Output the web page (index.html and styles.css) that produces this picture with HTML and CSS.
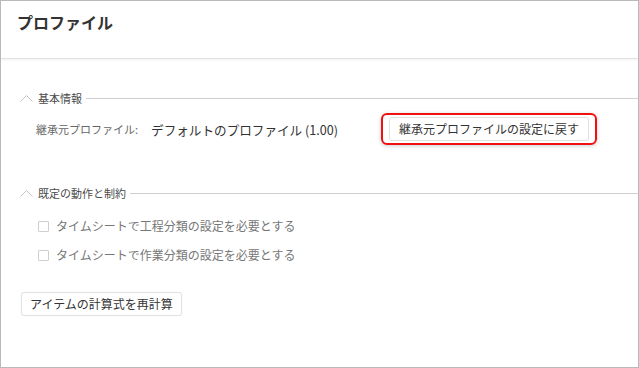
FILE: index.html
```html
<!DOCTYPE html>
<html lang="ja">
<head>
  <meta charset="UTF-8" />
  <meta name="viewport" content="width=device-width, initial-scale=1.0" />
  <title>プロファイル</title>
  <link rel="stylesheet" href="styles.css">
</head>
<body>

<div class="frame">
  <div class="header">
    <h1 class="title">プロファイル</h1>
  </div>

  <div class="section basic">
    <div class="section-head">
      <svg class="chevron" width="13" height="8" viewBox="0 0 13 8"><polyline points="0.5,7.5 6.5,1.5 12.5,7.5" fill="none" stroke="#c4c4c4" stroke-width="1" /></svg>
      <span class="section-title">基本情報</span>
      <span class="rule"></span>
    </div>
    <div class="field">
      <span class="field-label">継承元プロファイル:</span>
      <span class="field-value">デフォルトのプロファイル (1.00)</span>
      <span class="highlight">
        <button class="btn">継承元プロファイルの設定に戻す</button>
      </span>
    </div>
  </div>

  <div class="section rules">
    <div class="section-head">
      <svg class="chevron" width="13" height="8" viewBox="0 0 13 8"><polyline points="0.5,7.5 6.5,1.5 12.5,7.5" fill="none" stroke="#c4c4c4" stroke-width="1" /></svg>
      <span class="section-title">既定の動作と制約</span>
      <span class="rule"></span>
    </div>
    <div class="checks">
      <label class="check"><span class="box"></span>タイムシートで工程分類の設定を必要とする</label>
      <label class="check"><span class="box"></span>タイムシートで作業分類の設定を必要とする</label>
    </div>
  </div>

  <div class="actions">
    <button class="btn">アイテムの計算式を再計算</button>
  </div>
</div>

</body>
</html>
```

FILE: styles.css
```css
html, body {
  margin: 0;
  padding: 0;
  background-color: white;
  font-family: 'Noto Sans CJK JP', 'Noto Sans', sans-serif;
  color: #333;
}

.frame {
  box-sizing: border-box;
  width: 639px;
  height: 368px;
  border: 1px solid #b9b9b9;
  overflow: hidden;
}

.header {
  height: 58px;
  padding: 9px 16px 0;
  box-sizing: border-box;
  border-bottom: 1px solid #e2e2e2;
  box-shadow: 0 1px 2px rgba(0, 0, 0, 0.06);
}

.title {
  margin: 0;
  font-size: 16px;
  line-height: 24px;
  font-weight: bold;
  color: #333;
}

.section-head {
  display: flex;
  align-items: center;
  height: 16px;
  padding-left: 19px;
}

.basic {
  margin-top: 31px;
}

.rules {
  margin-top: 40px;
}

.chevron {
  display: block;
  margin-right: 5px;
}

.section-title {
  font-size: 11px;
  line-height: 16px;
  color: #4a4a4a;
}

.rule {
  flex: 1;
  margin-left: 4px;
  border-top: 1px solid #cfcfcf;
}

.field {
  display: flex;
  align-items: center;
  margin-top: 7px;
  padding-left: 35px;
}

.field-label {
  font-size: 11px;
  color: #666;
}

.field-value {
  margin-left: 13px;
  font-size: 12.6px;
  color: #333;
}

.highlight {
  margin-left: 43px;
  padding: 2px 6px;
  border: 2px solid #f01010;
  border-radius: 6px;
  box-shadow: 0 1px 4px rgba(0, 0, 0, 0.2);
  display: flex;
}

.btn {
  font-family: inherit;
  font-size: 12px;
  line-height: 16px;
  color: #333;
  background-color: white;
  border: 1px solid #e2e2e2;
  border-radius: 3px;
  padding: 3px 8px;
  box-shadow: 0 0 1px rgba(0, 0, 0, 0.05);
}

.highlight .btn {
  padding: 3px 9px;
}

.checks {
  display: flex;
  flex-direction: column;
  gap: 9px;
  margin-top: 15px;
  padding-left: 37px;
}

.check {
  display: flex;
  align-items: center;
  gap: 7px;
  font-size: 12px;
  line-height: 20px;
  color: #777;
}

.box {
  box-sizing: border-box;
  width: 11px;
  height: 11px;
  border: 1px solid #cfcfcf;
  border-radius: 1px;
}

.actions {
  margin-top: 25px;
  padding-left: 20px;
}
```
